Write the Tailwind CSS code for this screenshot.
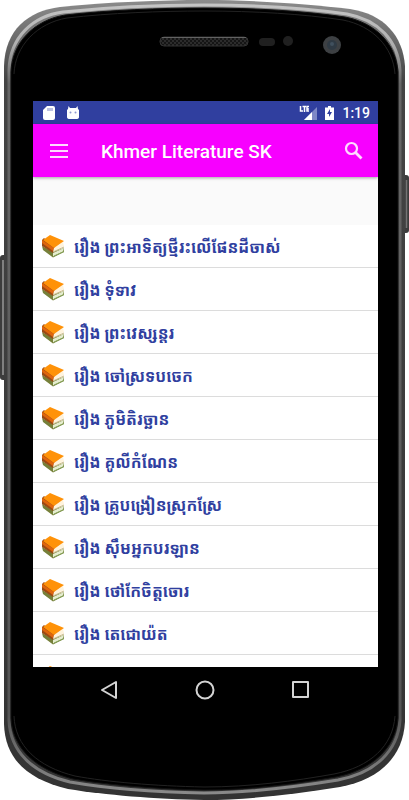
<!DOCTYPE html>
<html lang="km">
<head>
    <meta charset="UTF-8">
    <meta name="viewport" content="width=device-width, initial-scale=1.0">
    <title>Khmer Literature SK</title>
    <script src="https://cdn.jsdelivr.net/npm/@tailwindcss/browser@4"></script>
</head>
<body class="bg-white font-['Roboto','Noto_Sans_Khmer','Noto_Sans',sans-serif]">
    <div class="relative h-screen flex flex-col pt-[101px] pb-[88px] pl-[33px] pr-[31px]">

        <!-- phone body -->
        <svg class="absolute inset-0 w-full h-full" viewBox="0 0 409 800" preserveAspectRatio="none" aria-hidden="true">
            <defs>
                <linearGradient id="rim" x1="0" y1="0" x2="0" y2="1">
                    <stop offset="0" stop-color="#8c8c8c"/>
                    <stop offset="0.05" stop-color="#6a6a6a"/>
                    <stop offset="0.1" stop-color="#444"/>
                    <stop offset="1" stop-color="#333"/>
                </linearGradient>
                <linearGradient id="shine" x1="0" y1="0" x2="0" y2="1">
                    <stop offset="0" stop-color="#c4c4c4"/>
                    <stop offset="0.05" stop-color="#b0b0b0"/>
                    <stop offset="0.1" stop-color="#666"/>
                    <stop offset="0.9" stop-color="#555"/>
                    <stop offset="1" stop-color="#8a8a8a"/>
                </linearGradient>
                <pattern id="mesh" width="4" height="4" patternUnits="userSpaceOnUse">
                    <rect width="4" height="4" fill="#151515"/>
                    <circle cx="1" cy="1" r="1" fill="#333"/>
                    <circle cx="3" cy="3" r="1" fill="#333"/>
                </pattern>
            </defs>
            <rect x="0" y="255" width="8" height="125" rx="3" fill="#3c3c3c"/>
            <path d="M3 260V375" stroke="#808080" stroke-width="2"/>
            <rect x="401" y="175" width="8" height="58" rx="3" fill="#3c3c3c"/>
            <path d="M406.500 180V228" stroke="#747474" stroke-width="1.500"/>
            <path d="M4 66C5 30 28 11 60 7C110 2 160 0 204 0C255 0 310 4 350 9C384 14 403 36 405 66V722C403 758 378 780 340 787C295 794 250 800 204 800C155 799 105 795 68 789C26 779 5 758 4 724Z" fill="url(#rim)"/>
            <path d="M9 70C10 37 33 16 63 12C110 7 160 5 204 5C255 5 307 8 347 14C379 20 398 41 400 70V720C398 751 375 773 338 780C295 787 250 793 204 793C155 792 105 788 70 782C32 773 10 751 9 720Z" fill="none" stroke="url(#shine)" stroke-width="3"/>
            <path d="M11 72C12 42 35 20 65 15C110 10 160 8 204 8C255 8 305 11 345 17C376 23 396 44 398 72V718C396 748 372 770 336 777C295 784 250 790 204 790C155 789 107 785 73 779C36 770 12 748 11 718Z" fill="#000" stroke="#111"/>
            <path d="M14 74C15 46 37 23 67 18C110 13 160 11 204 11C255 11 303 14 343 20C373 26 393 47 395 74M14 716C15 746 38 767 75 776C107 782 155 786 204 787C250 787 295 781 334 774C370 767 393 746 395 716" fill="none" stroke="#222"/>
            <rect x="160" y="37" width="88" height="9" rx="4" fill="url(#mesh)" stroke="#333"/>
            <path d="M162 37.500H246" stroke="#626262"/>
            <rect x="259" y="38" width="16" height="8" rx="4" fill="#202020"/>
            <circle cx="288" cy="41" r="5" fill="#202020"/>
            <circle cx="332" cy="45" r="9" fill="#3d4043"/>
            <circle cx="332" cy="45" r="5" fill="#2f3a44"/>
            <circle cx="332" cy="44" r="2" fill="#40505e"/>
        </svg>

        <main class="relative flex-1 min-h-0 flex flex-col bg-[#fafafa]">
            <!-- status bar -->
            <div class="h-[23px] shrink-0 bg-[#303f9f] flex items-center pl-1 pr-2 text-white">
                <svg class="w-6 h-6 p-1" viewBox="0 0 16 16" aria-hidden="true">
                    <path d="M6 1H12Q14 1 14 3V13Q14 15 12 15H4Q2 15 2 13V5Z" fill="#fff"/>
                    <path d="M7 3V6M9 3V6M11 3V6" stroke="#7d86c4"/>
                </svg>
                <svg class="w-6 h-6 p-1" viewBox="0 0 16 16" aria-hidden="true">
                    <path d="M2 5L3 4L3.500 1L5 3H11L12.500 1L13 4L14 5V12Q14 14 11 14H5Q2 14 2 12Z" fill="#fff"/>
                    <circle cx="5.500" cy="7.500" r="1" fill="#8f98d0"/>
                    <circle cx="10.500" cy="7.500" r="1" fill="#8f98d0"/>
                </svg>
                <div class="ml-auto flex items-center gap-2">
                    <svg class="w-[18px] h-4" viewBox="0 0 18 16" aria-hidden="true">
                        <path d="M18 2V15H5Z" fill="#7e88c6"/>
                        <path d="M13 7V15H5Z" fill="#fff"/>
                        <path d="M1.500 1V6H4M3.500 1.500H7M5.500 1V7M10 1.500H8V6H10M8 4H10" stroke="#fff" stroke-width="1.500" fill="none"/>
                    </svg>
                    <svg class="w-[9px] h-[14px]" viewBox="0 0 9 14" aria-hidden="true">
                        <path d="M3 0H6V1.500H9V14H0V1.500H3Z" fill="#fff"/>
                        <path d="M5 3L2 8H4V11L7 6H5Z" fill="#303f9f"/>
                    </svg>
                    <span class="text-sm font-medium">1:19</span>
                </div>
            </div>

            <!-- toolbar -->
            <header class="h-[53px] shrink-0 bg-[#f700ff] flex items-center pl-4 pr-3 text-white shadow-[0_1px_3px_rgba(0,0,0,0.35)]">
                <button type="button" aria-label="Menu">
                    <svg class="w-5 h-5" viewBox="0 0 20 20" aria-hidden="true">
                        <path d="M1 4H19M1 10H19M1 16H19" stroke="#ffd9ff" stroke-width="2"/>
                    </svg>
                </button>
                <h1 class="ml-8 pt-[3px] text-[19px] font-medium whitespace-nowrap">Khmer Literature SK</h1>
                <button type="button" class="ml-auto" aria-label="Search">
                    <svg class="w-6 h-6" viewBox="0 0 24 24" aria-hidden="true">
                        <circle cx="9.500" cy="9.500" r="5.500" fill="none" stroke="#ffd9ff" stroke-width="2.200"/>
                        <path d="M13.500 13.500L19.500 19.500" stroke="#ffd9ff" stroke-width="2.800"/>
                    </svg>
                </button>
            </header>

            <svg class="hidden">
                <symbol id="books" viewBox="0 0 24 24">
                    <path d="M1 12L2 16L12 23.500L23 18V14L12 18Z" fill="#76803a"/>
                    <path d="M12 19L23 14L22 17.500L12 22.500Z" fill="#e6edcf"/>
                    <path d="M13 22L23 17.500" stroke="#86a35a"/>
                    <path d="M1 6L3 4L14 14L12 19L1 12Z" fill="#9a4a14"/>
                    <path d="M1 6L13 14L12 17L1 9Z" fill="#e0650c"/>
                    <path d="M13 14L22 8L23 12L12 18Z" fill="#fff3dc"/>
                    <path d="M12 18L23 13" stroke="#c9b988"/>
                    <path d="M2 6L9 1L23 7L13 14Z" fill="#ff9208"/>
                </symbol>
            </svg>

            <ul class="mt-12 flex-1 min-h-0 overflow-hidden bg-white text-[#303f9f] text-base font-bold">
                <li class="h-[43px] flex items-center gap-[9px] px-2 border-b border-[#dcdcdc] whitespace-nowrap">
                    <svg class="w-6 h-6 shrink-0" aria-hidden="true"><use href="#books"/></svg>
                    <span class="pt-1">រឿង ព្រះអាទិត្យថ្មីរះលើផែនដីចាស់</span>
                </li>
                <li class="h-[43px] flex items-center gap-[9px] px-2 border-b border-[#dcdcdc] whitespace-nowrap">
                    <svg class="w-6 h-6 shrink-0" aria-hidden="true"><use href="#books"/></svg>
                    <span class="pt-1">រឿង ទុំទាវ</span>
                </li>
                <li class="h-[43px] flex items-center gap-[9px] px-2 border-b border-[#dcdcdc] whitespace-nowrap">
                    <svg class="w-6 h-6 shrink-0" aria-hidden="true"><use href="#books"/></svg>
                    <span class="pt-1">រឿង ព្រះវេស្សន្តរ</span>
                </li>
                <li class="h-[43px] flex items-center gap-[9px] px-2 border-b border-[#dcdcdc] whitespace-nowrap">
                    <svg class="w-6 h-6 shrink-0" aria-hidden="true"><use href="#books"/></svg>
                    <span class="pt-1">រឿង ចៅស្រទបចេក</span>
                </li>
                <li class="h-[43px] flex items-center gap-[9px] px-2 border-b border-[#dcdcdc] whitespace-nowrap">
                    <svg class="w-6 h-6 shrink-0" aria-hidden="true"><use href="#books"/></svg>
                    <span class="pt-1">រឿង ភូមិតិរច្ឆាន</span>
                </li>
                <li class="h-[43px] flex items-center gap-[9px] px-2 border-b border-[#dcdcdc] whitespace-nowrap">
                    <svg class="w-6 h-6 shrink-0" aria-hidden="true"><use href="#books"/></svg>
                    <span class="pt-1">រឿង គូលីកំណែន</span>
                </li>
                <li class="h-[43px] flex items-center gap-[9px] px-2 border-b border-[#dcdcdc] whitespace-nowrap">
                    <svg class="w-6 h-6 shrink-0" aria-hidden="true"><use href="#books"/></svg>
                    <span class="pt-1">រឿង គ្រូបង្រៀនស្រុកស្រែ</span>
                </li>
                <li class="h-[43px] flex items-center gap-[9px] px-2 border-b border-[#dcdcdc] whitespace-nowrap">
                    <svg class="w-6 h-6 shrink-0" aria-hidden="true"><use href="#books"/></svg>
                    <span class="pt-1">រឿង ស៊ឹមអ្នកបរឡាន</span>
                </li>
                <li class="h-[43px] flex items-center gap-[9px] px-2 border-b border-[#dcdcdc] whitespace-nowrap">
                    <svg class="w-6 h-6 shrink-0" aria-hidden="true"><use href="#books"/></svg>
                    <span class="pt-1">រឿង ថៅកែចិត្តចោរ</span>
                </li>
                <li class="h-[43px] flex items-center gap-[9px] px-2 border-b border-[#dcdcdc] whitespace-nowrap">
                    <svg class="w-6 h-6 shrink-0" aria-hidden="true"><use href="#books"/></svg>
                    <span class="pt-1">រឿង តេជោយ៉ត</span>
                </li>
                <li class="h-[43px] flex items-center gap-[9px] px-2 whitespace-nowrap">
                    <svg class="w-6 h-6 shrink-0" aria-hidden="true"><use href="#books"/></svg>
                </li>
            </ul>

            <!-- navigation bar -->
            <nav class="h-[45px] shrink-0 bg-black flex items-center justify-center gap-[72px] pr-0.5">
                <button type="button" aria-label="Back">
                    <svg class="w-6 h-6" viewBox="0 0 24 24" fill="none" stroke="#d4d4d4" stroke-width="2" stroke-linejoin="round" aria-hidden="true">
                        <path d="M19 4V20L5 12Z"/>
                    </svg>
                </button>
                <button type="button" aria-label="Home">
                    <svg class="w-6 h-6" viewBox="0 0 24 24" fill="none" stroke="#d4d4d4" stroke-width="2" aria-hidden="true">
                        <circle cx="12" cy="12" r="8.500"/>
                    </svg>
                </button>
                <button type="button" aria-label="Overview">
                    <svg class="w-6 h-6" viewBox="0 0 24 24" fill="none" stroke="#d4d4d4" stroke-width="2" stroke-linejoin="round" aria-hidden="true">
                        <rect x="4" y="4" width="15" height="15"/>
                    </svg>
                </button>
            </nav>
        </main>
    </div>
</body>
</html>
